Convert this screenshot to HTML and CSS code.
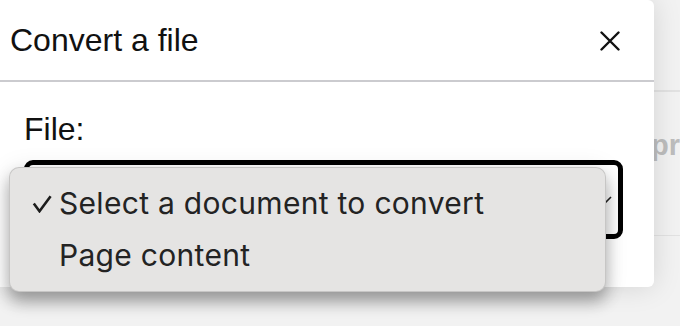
FILE: index.html
```html
<!DOCTYPE html>
<html lang="en">
<head>
<meta charset="utf-8">
<title>Convert a file</title>
<link rel="stylesheet" href="styles.css">
</head>
<body>
  <div class="page">
    <div class="page-row first"></div>
    <div class="page-row second"><span class="page-text">preview</span></div>
  </div>

  <div class="dialog" role="dialog" aria-label="Convert a file">
    <div class="dialog-header">
      <h1 class="dialog-title">Convert a file</h1>
      <button class="close-btn" aria-label="Close">
        <svg width="20" height="20" viewBox="0 0 20 20"><path d="M1.5 1.5 L18.5 18.5 M18.5 1.5 L1.5 18.5" stroke="#111" stroke-width="2.4" stroke-linecap="round" fill="none"/></svg>
      </button>
    </div>
    <div class="dialog-body">
      <label class="field-label">File:</label>
      <div class="select-wrap">
        <div class="select" aria-label="Select a document to convert">
          <svg class="chevron" width="18" height="10" viewBox="0 0 18 10"><path d="M1 1 L9 9 L17 1" stroke="#222" stroke-width="1.6" fill="none"/></svg>
        </div>
        <ul class="menu">
          <li class="menu-item checked">
            <svg class="check" width="20" height="18" viewBox="0 0 20 18"><path d="M1.8 8.5 L7.5 16.2 L18.6 1.2" stroke="#1c1c1c" stroke-width="2.6" fill="none" stroke-linejoin="miter"/></svg>
            <span>Select a document to convert</span>
          </li>
          <li class="menu-item"><span class="check-space"></span><span>Page content</span></li>
        </ul>
      </div>
    </div>
  </div>
</body>
</html>
```

FILE: styles.css
```css
html, body {
  margin: 0;
  padding: 0;
}
body {
  width: 680px;
  height: 326px;
  overflow: hidden;
  background: #f2f2f2;
  font-family: "Liberation Sans", Arial, sans-serif;
  position: relative;
}

.page {
  padding-top: 90px;
}
.page-row {
  border-top: 1px solid #e2e2e2;
}
.page-row.second {
  height: 145px;
  border-bottom: 1px solid #e2e2e2;
  padding-left: 651px;
  padding-top: 36px;
  box-sizing: border-box;
  white-space: nowrap;
}
.page-text {
  font-size: 29px;
  font-weight: bold;
  color: #bdbdbd;
  line-height: 34px;
}

.dialog {
  position: absolute;
  left: 0;
  top: 0;
  width: 654px;
  height: 287px;
  background: #fff;
  border-radius: 0 6px 6px 0;
  box-shadow: 0 0 28px rgba(0, 0, 0, 0.13);
}

.dialog-header {
  height: 80px;
  border-bottom: 2px solid #cbcbcf;
  display: flex;
  align-items: center;
  justify-content: space-between;
  padding-left: 10px;
  padding-right: 34px;
}
.dialog-title {
  margin: 0;
  font-weight: normal;
  font-size: 32px;
  color: #111;
  line-height: 37px;
}
.close-btn {
  border: 0;
  background: none;
  padding: 0;
  width: 20px;
  height: 20px;
  display: flex;
  margin-top: 2px;
}

.dialog-body {
  padding: 29px 0 0 24px;
}
.field-label {
  display: block;
  font-size: 32px;
  line-height: 37px;
  color: #111;
  margin-bottom: 12px;
}

.select-wrap {
  position: relative;
  width: 599px;
}
.select {
  height: 79px;
  box-sizing: border-box;
  border: 5px solid #000;
  border-radius: 9px;
  display: flex;
  align-items: center;
  justify-content: flex-end;
  padding: 0 6px 0 20px;
}
.chevron {
  margin-top: 2px;
}

.menu {
  position: absolute;
  left: -15px;
  top: 7px;
  width: 597px;
  height: 125px;
  box-sizing: border-box;
  margin: 0;
  padding: 9px 0 0 22px;
  list-style: none;
  background: #e5e4e3;
  border: 1px solid rgba(0, 0, 0, 0.13);
  border-radius: 10px;
  box-shadow: 0 10px 16px rgba(0, 0, 0, 0.3), 0 2px 24px rgba(0, 0, 0, 0.1);
  font-family: Inter, "Liberation Sans", sans-serif;
  font-size: 30px;
  letter-spacing: 0.3px;
  color: #232323;
}
.menu-item {
  height: 52px;
  line-height: 52px;
  display: flex;
  align-items: center;
  white-space: nowrap;
}
.check, .check-space {
  width: 20px;
  flex: none;
  margin-right: 7px;
}
.check {
  margin-top: 2px;
}
```
